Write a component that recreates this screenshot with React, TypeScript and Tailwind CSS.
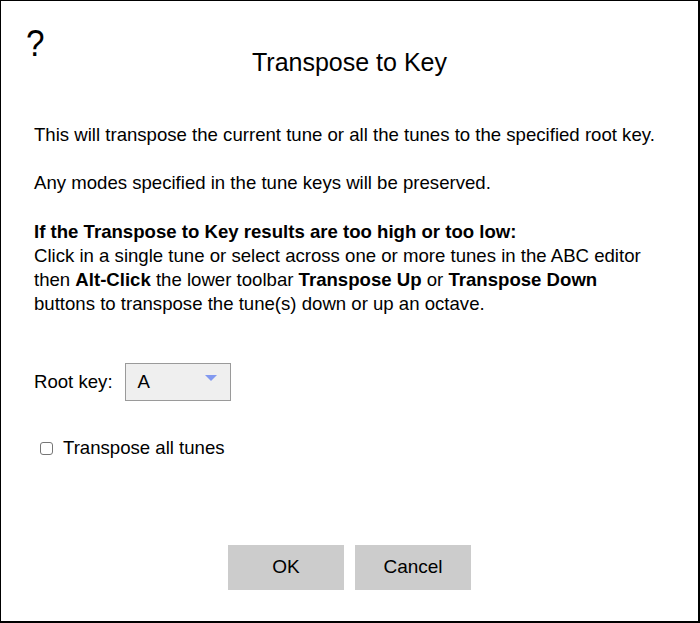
export default function App() {
  return (
    <div className="w-[700px] h-[623px] bg-white border-t border-l border-r-2 border-b-2 border-black font-['Liberation_Sans',Arial,sans-serif] text-black flex flex-col">
      <div className="relative h-[110px]">
        <span className="absolute left-[25px] top-[24px] text-[37px] leading-none scale-x-90 origin-left">?</span>
        <h1 className="pt-[49px] text-center text-[25px] leading-none">Transpose to Key</h1>
      </div>

      <div className="px-[33px] text-[18.6px] leading-[24px]">
        <p className="mt-[12px]">
          This will transpose the current tune or all the tunes to the specified root key.
        </p>
        <p className="mt-[24px]">Any modes specified in the tune keys will be preserved.</p>
        <p className="mt-[25px]">
          <b>If the Transpose to Key results are too high or too low:</b>
          <br />
          Click in a single tune or select across one or more tunes in the ABC editor
          <br />
          then <b>Alt-Click</b> the lower toolbar <b>Transpose Up</b> or <b>Transpose Down</b>
          <br />
          buttons to transpose the tune(s) down or up an octave.
        </p>

        <div className="mt-[47px] flex items-center gap-[12px]">
          <span>Root key:</span>
          <div className="w-[106px] h-[38px] bg-[#efefef] border border-[#9a9a9a] flex items-center justify-between pl-[12px] pr-[13px]">
            <span>A</span>
            <svg width="12" height="7" viewBox="0 0 12 7" className="mb-[7px]">
              <polygon points="0,0 12,0 6,6" fill="#8299f0" />
            </svg>
          </div>
        </div>

        <label className="mt-[35px] ml-[6px] flex items-center gap-[10px]">
          <input type="checkbox" className="w-[13px] h-[13px] m-0 appearance-none border border-[#767676] rounded-[3px] bg-white" />
          <span>Transpose all tunes</span>
        </label>
      </div>

      <div className="mt-auto mb-[31px] flex justify-center gap-[11px]">
        <button className="w-[116px] h-[45px] bg-[#cccccc] text-[19px]">OK</button>
        <button className="w-[116px] h-[45px] bg-[#cccccc] text-[19px]">Cancel</button>
      </div>
    </div>
  );
}
